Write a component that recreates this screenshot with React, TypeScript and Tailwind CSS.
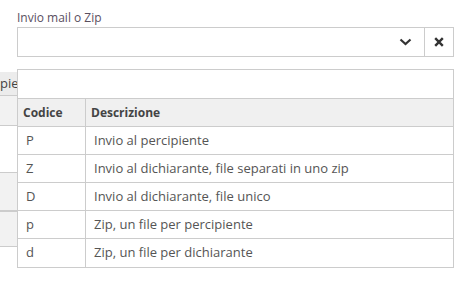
import React from "react";

const rows: [string, string][] = [
  ["P", "Invio al percipiente"],
  ["Z", "Invio al dichiarante, file separati in uno zip"],
  ["D", "Invio al dichiarante, file unico"],
  ["p", "Zip, un file per percipiente"],
  ["d", "Zip, un file per dichiarante"],
];

export default function App() {
  return (
    <div
      className="relative w-[465px] h-[285px] bg-white overflow-hidden text-[12px] text-[#555]"
      style={{ fontFamily: '"Open Sans", sans-serif' }}
    >
      <div className="pt-[9px] px-[17px]">
        <div className="h-[17px] leading-[17px] text-[#5a4f5f]">Invio mail o Zip</div>
        <div className="mt-[1px] h-[30px] w-[437px] border border-[#ccc] flex">
          <div className="flex-1" />
          <div className="w-[37px] flex items-center justify-center">
            <svg width="13" height="8" viewBox="0 0 13 8">
              <path d="M1.5 1.5 L6.5 6 L11.5 1.5" fill="none" stroke="#333" strokeWidth="2.2" />
            </svg>
          </div>
          <div className="w-[29px] border-l border-[#ccc] flex items-center justify-center">
            <svg width="10" height="10" viewBox="0 0 10 10">
              <path d="M1.2 1.2 L8.8 8.8 M8.8 1.2 L1.2 8.8" fill="none" stroke="#333" strokeWidth="2.4" />
            </svg>
          </div>
        </div>
      </div>

      {/* background page table, mostly hidden behind the dropdown */}
      <div className="mt-[15px] w-[300px]">
        <div className="h-[24px] bg-[#ececec] border-b border-[#ccc] flex items-center whitespace-nowrap overflow-hidden text-[13px]">
          <span className="ml-[-30px] text-[#444]">Percipiente</span>
        </div>
        <div className="h-[30px] bg-[#f2f2f2] border-b border-[#ccc]" />
        <div className="h-[47px] bg-white border-b border-[#ccc]" />
        <div className="h-[39px] bg-[#f2f2f2] border-b-2 border-[#ccc]" />
        <div className="h-[35px] bg-[#f2f2f2] border-b border-[#ccc]" />
      </div>

      {/* dropdown overlay */}
      <div className="absolute top-[69px] left-[17px] w-[437px] bg-white border border-[#ccc]">
        <div className="h-[28px]" />
        <div className="grid grid-cols-[68px_1fr] h-[28px] bg-[#f0f0f0] border-t border-[#ccc] font-bold text-[#444]">
          <div className="border-r border-[#ccc] pl-[5px] flex items-center">Codice</div>
          <div className="pl-[5px] flex items-center">Descrizione</div>
        </div>
        {rows.map(([c, d], i) => (
          <div
            key={c}
            className={`grid grid-cols-[68px_1fr] border-t border-[#ccc] text-[13px] ${i === rows.length - 1 ? "h-[29px]" : "h-[28px]"}`}
          >
            <div className="border-r border-[#ccc] pl-[8px] flex items-center">{c}</div>
            <div className="pl-[8px] flex items-center">{d}</div>
          </div>
        ))}
      </div>
    </div>
  );
}
